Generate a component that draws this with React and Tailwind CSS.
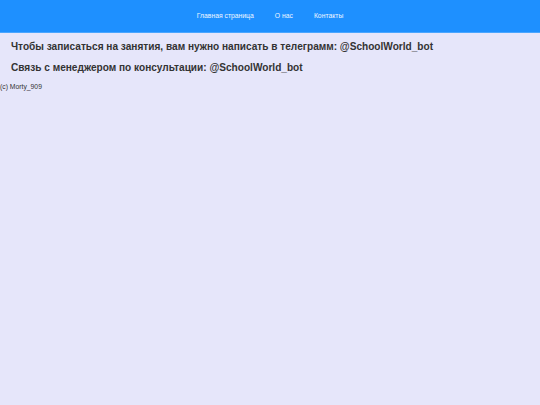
import React from "react";

const App = () => {
  return (
    <div className="min-h-[405px] bg-[#e6e6fa] font-['Liberation_Sans',Arial,sans-serif] text-[#333]">
      <header className="h-[33px] bg-[#1e90ff] border-b border-[#4aa6ff] flex justify-center items-center">
        <nav className="flex gap-[21px] text-[6.8px] text-[#eef6ff]">
          <a href="#">Главная страница</a>
          <a href="#">О нас</a>
          <a href="#">Контакты</a>
        </nav>
      </header>
      <main className="px-[11px] pt-[8px]">
        <h2 className="text-[10.1px] font-bold leading-[12px]">
          Чтобы записаться на занятия, вам нужно написать в телеграмм: @SchoolWorld_bot
        </h2>
        <h2 className="text-[10.1px] font-bold leading-[12px] mt-[9px]">
          Связь с менеджером по консультации: @SchoolWorld_bot
        </h2>
      </main>
      <footer className="text-[6.8px] leading-[9px] mt-[8px]">(c) Morty_909</footer>
    </div>
  );
};

export default App;
